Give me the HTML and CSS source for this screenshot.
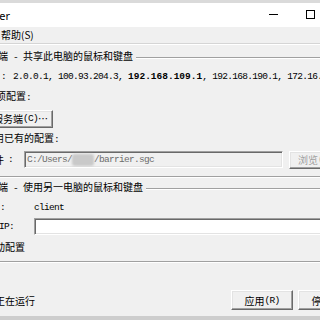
FILE: index.html
```html
<!DOCTYPE html>
<html>
<head>
<meta charset="utf-8">
<link rel="stylesheet" href="styles.css">
</head>
<body>
<div class="win">
  <div class="frame-top"></div>
  <div class="titlebar">
    <div class="tcell">
      <svg class="ticon" viewBox="0 0 14 14"><rect x="1" y="2" width="12" height="9" rx="1" fill="#3b7dd8"/><rect x="5" y="11" width="4" height="2" fill="#3b7dd8"/></svg>
      <span>Barrier</span>
    </div>
    <div class="grow"></div>
    <div class="tbtn"><span class="min"></span></div>
    <div class="tbtn"><span class="max"></span></div>
    <div class="tbtn"><svg width="10" height="10" viewBox="0 0 10 10"><path d="M0 0L10 10M10 0L0 10" stroke="#000" stroke-width="1"/></svg></div>
  </div>
  <div class="menubar">
    <div class="mlead"><span class="mitem">文件(F)</span><span class="mitem">编辑(E)</span></div>
    <span class="mitem mhelp">帮助(S)</span>
  </div>

  <section class="group g1">
    <div class="gtitle"><span class="cb"></span><span>服务端<span class="a"> - </span>共享此电脑的鼠标和键盘</span></div>
    <div class="row r-ip">
      <div class="lab w-ip"><span class="a">IP </span>地址<span class="a">:</span></div>
      <div class="a ips">2.0.0.1, 100.93.204.3, <b>192.168.109.1</b>, 192.168.190.1, 172.16.0.1</div>
    </div>
    <div class="row r-r1">
      <div class="lab w-r1"><span class="rb"></span><span>交互项配置<span class="a">:</span></span></div>
    </div>
    <div class="row r-btn">
      <button class="btn btn-cfg">配置服务端<span class="a">(C)</span>…</button>
    </div>
    <div class="row r-r2">
      <div class="lab w-r2"><span class="rb on"></span><span>使用已有的配置<span class="a">:</span></span></div>
    </div>
    <div class="row r-file">
      <div class="lab w-file">配置文件<span class="a">:</span></div>
      <div class="field off"><span class="a">C:/Users/</span><span class="blur"></span><span class="a">/barrier.sgc</span></div>
      <button class="btn btn-browse" disabled>浏览<span class="a">(B)</span>…</button>
    </div>
  </section>

  <section class="group g2">
    <div class="gtitle"><span class="cb"></span><span>客户端<span class="a"> - </span>使用另一电脑的鼠标和键盘</span></div>
    <div class="row r-name">
      <div class="lab w-name">屏幕名称<span class="a">:</span></div>
      <div class="a">client</div>
    </div>
    <div class="row r-sip">
      <div class="lab w-sip">服务端<span class="a"> IP:</span></div>
      <div class="field on"></div>
    </div>
    <div class="row r-auto">
      <div class="lab w-auto"><span class="cb"></span><span>自动配置</span></div>
    </div>
  </section>

  <div class="status">
    <div class="lab w-status"><span class="sicon"></span><span><span class="a">Barrier </span>正在运行</span></div>
    <div class="grow"></div>
    <button class="btn btn-act">应用<span class="a">(R)</span></button>
    <button class="btn btn-act">停止<span class="a">(S)</span></button>
  </div>
  <div class="frame-bottom"></div>
</div>
</body>
</html>
```
FILE: styles.css
```css
html, body { margin: 0; height: 100%; }
body {
  background: #f0f0f0;
  overflow: hidden;
  font-family: "Noto Sans CJK SC", sans-serif;
  font-size: 10px;
  color: #000;
}
.win { margin-left: -80px; width: 446px; }
.grow { flex: 1; }

.frame-top { height: 3px; background: #dadada; }
.titlebar { height: 24px; background: #fff; display: flex; align-items: center; }
.tcell {
  width: 90px; flex: none; display: flex; justify-content: flex-end; align-items: center; gap: 6px;
  font-family: "Noto Sans", sans-serif; font-size: 11px; white-space: nowrap;
}
.ticon { width: 14px; height: 14px; flex: none; }
.tbtn { width: 37px; height: 24px; flex: none; display: flex; align-items: center; justify-content: center; }
.min { width: 9px; height: 1px; background: #000; margin-top: -2px; }
.max { width: 7px; height: 7px; border: 1px solid #000; margin-top: -1px; }

.menubar {
  height: 16px; border-bottom: 1px solid #d5d5d5; box-shadow: 0 1px 0 #fff;
  display: flex; align-items: center; white-space: nowrap; line-height: 16px;
}
.mlead { flex: none; width: 79px; min-width: 0; overflow: hidden; display: flex; justify-content: flex-end; }
.mitem { flex: none; padding: 0 3px; }
.mhelp { padding-left: 2px; }

.a { font-family: "Liberation Mono", monospace; font-size: 9.5px; letter-spacing: -0.7px; }
.a b { letter-spacing: 0; }

.group {
  margin: 0 8px;
  border: 1px solid #a0a0a0;
  box-shadow: 1px 1px 0 #fff, inset 1px 1px 0 #fff;
  padding: 0 5px 7px 0;
}
.g1 { margin-top: 13px; }
.g2 { margin-top: 11px; }
.gtitle {
  display: flex; align-items: center; gap: 4px; width: max-content;
  margin: -8px 0 0 29px; padding: 0 3px; background: #f0f0f0;
  height: 14px; line-height: 14px; white-space: nowrap;
}
.cb { width: 11px; height: 11px; border: 1px solid #333; background: #fff; flex: none; }
.rb { width: 10px; height: 10px; border: 1px solid #555; border-radius: 50%; background: #fff; flex: none; }

.row { display: flex; align-items: center; height: 14px; line-height: 14px; white-space: nowrap; }
.lab { flex: none; display: flex; justify-content: flex-end; align-items: center; gap: 4px; white-space: nowrap; }

.r-ip { margin-top: 6px; }
.w-ip { width: 77px; }
.ips { margin-left: 7px; }
.r-r1 { margin-top: 6px; }
.w-r1 { width: 102px; }
.r-btn { margin-top: 6px; height: 18px; }
.r-r2 { margin-top: 4px; }
.w-r2 { width: 130px; }
.r-file { margin-top: 5px; height: 18px; align-items: flex-start; }
.w-file { width: 84px; align-self: center; }

.btn {
  box-sizing: border-box; margin: 0; padding: 0;
  font: inherit; color: #000; background: #f0f0f0;
  border: 1px solid; border-color: #fff #696969 #696969 #fff;
  box-shadow: inset -1px -1px 0 #a0a0a0, inset 1px 1px 0 #e3e3e3;
  display: flex; align-items: center; justify-content: center; white-space: nowrap;
}
.btn-cfg { margin-left: 31px; width: 93px; height: 18px; justify-content: flex-end; padding-right: 4px; }
.btn-browse { margin-left: 6px; width: 63px; height: 18px; color: #a0a0a0; }
.btn-act { width: 62px; height: 20px; }
.btn-act + .btn-act { margin-left: 5px; }

.field {
  flex: 1; box-sizing: border-box; height: 17px; margin-left: 11px;
  border: 1px solid; border-color: #a0a0a0 #fff #fff #a0a0a0;
  box-shadow: inset 1px 1px 0 #696969, inset -1px -1px 0 #e3e3e3;
  padding-left: 2px; display: flex; align-items: center; overflow: hidden;
}
.field.off { background: #f0f0f0; color: #6d6d6d; }
.field.on { background: #fff; margin-left: 0; }
.blur { display: inline-block; width: 22px; height: 12px; background: #c9c9c9; border-radius: 3px; filter: blur(1px); }

.r-name { margin-top: 6px; }
.w-name { width: 76px; margin-right: 29px; }
.r-sip { margin-top: 3px; height: 17px; }
.w-sip { width: 85px; margin-right: 20px; }
.r-auto { margin-top: 5px; }
.w-auto { width: 96px; }

.status { display: flex; align-items: center; height: 20px; margin-top: 28px; padding-right: 6px; white-space: nowrap; }
.w-status { width: 115px; }
.sicon { width: 14px; height: 14px; border-radius: 50%; background: #4caf50; flex: none; }
.frame-bottom { margin-top: 6px; height: 10px; background: #cdcdcd; }
```
